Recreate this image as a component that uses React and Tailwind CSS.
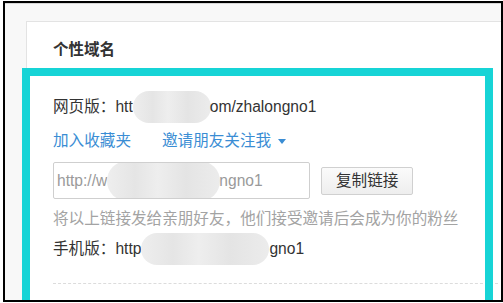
import React from "react";

const font = { fontFamily: '"Liberation Sans", "Noto Sans CJK SC", sans-serif' };

function Blur({ w, h = 32 }) {
  return (
    <span
      className={`inline-block shrink-0 rounded-full bg-[linear-gradient(90deg,#eeeeee,#e5e5e5_25%,#eeeeee_45%,#e4e4e4_70%,#ececec)] ${w} ${h === 32 ? "h-[32px]" : "h-[40px]"}`}
    />
  );
}

export default function App() {
  return (
    <div className="bg-white w-[503px] h-[303px] pt-[1px]" style={font}>
      <div className="relative ml-[3px] w-[500px] h-[301px] border-2 border-black bg-[#f8f8f8] overflow-hidden">
        <div className="h-[1px] bg-[#d6d6d6]" />
        <div className="pt-[17px] pl-[21px] h-full">
          <div className="bg-white border-l border-t border-[#e3e3e3] w-[520px] h-full pl-[26px] pt-[18px]">
            <h2 className="text-[15.5px] leading-5 font-bold text-[#333]">个性域名</h2>

            <div className="mt-[37px] text-[15.6px] leading-5 text-[#333]">
              <div className="flex items-center h-5">
                <span>网页版：htt</span>
                <Blur w="w-[78px]" />
                <span className="-ml-[1px]">om/zhalongno1</span>
              </div>

              <div className="flex items-center h-5 mt-[14px] text-[#3a8dd4]">
                <span>加入收藏夹</span>
                <span className="ml-[31px]">邀请朋友关注我</span>
                <svg width="8" height="5" viewBox="0 0 8 5" className="ml-[7px] mt-[1px]">
                  <path d="M0 0h8L4 5z" fill="#3a8dd4" />
                </svg>
              </div>

              <div className="flex items-center mt-[11px]">
                <div className="flex items-center w-[257px] h-[37px] border border-[#cfcfcf] rounded-[2px] bg-white pl-[3px] text-[#9a9a9a] overflow-hidden">
                  <span>http://w</span>
                  <Blur w="w-[113px]" h={40} />
                  <span className="-ml-[1px]">ngno1</span>
                </div>
                <button className="ml-[11px] h-[28px] px-[14px] border border-[#d0d0d0] rounded-[2px] bg-[linear-gradient(#fbfbfb,#eeeeee)] text-[15.6px] leading-5 text-[#333]">
                  复制链接
                </button>
              </div>

              <p className="mt-[10px] h-5 text-[#a3a3a3]">将以上链接发给亲朋好友，他们接受邀请后会成为你的粉丝</p>

              <div className="flex items-center h-5 mt-[10px]">
                <span>手机版：http</span>
                <Blur w="w-[128px]" />
                <span>gno1</span>
              </div>

              <div className="mt-[24px] w-[445px] border-t border-dashed border-[#dcdcdc]" />
            </div>
          </div>
        </div>

        <div className="pointer-events-none absolute left-[17px] top-[65px] w-[471px] h-[300px] border-8 border-[#17d4d6]" />
      </div>
    </div>
  );
}
